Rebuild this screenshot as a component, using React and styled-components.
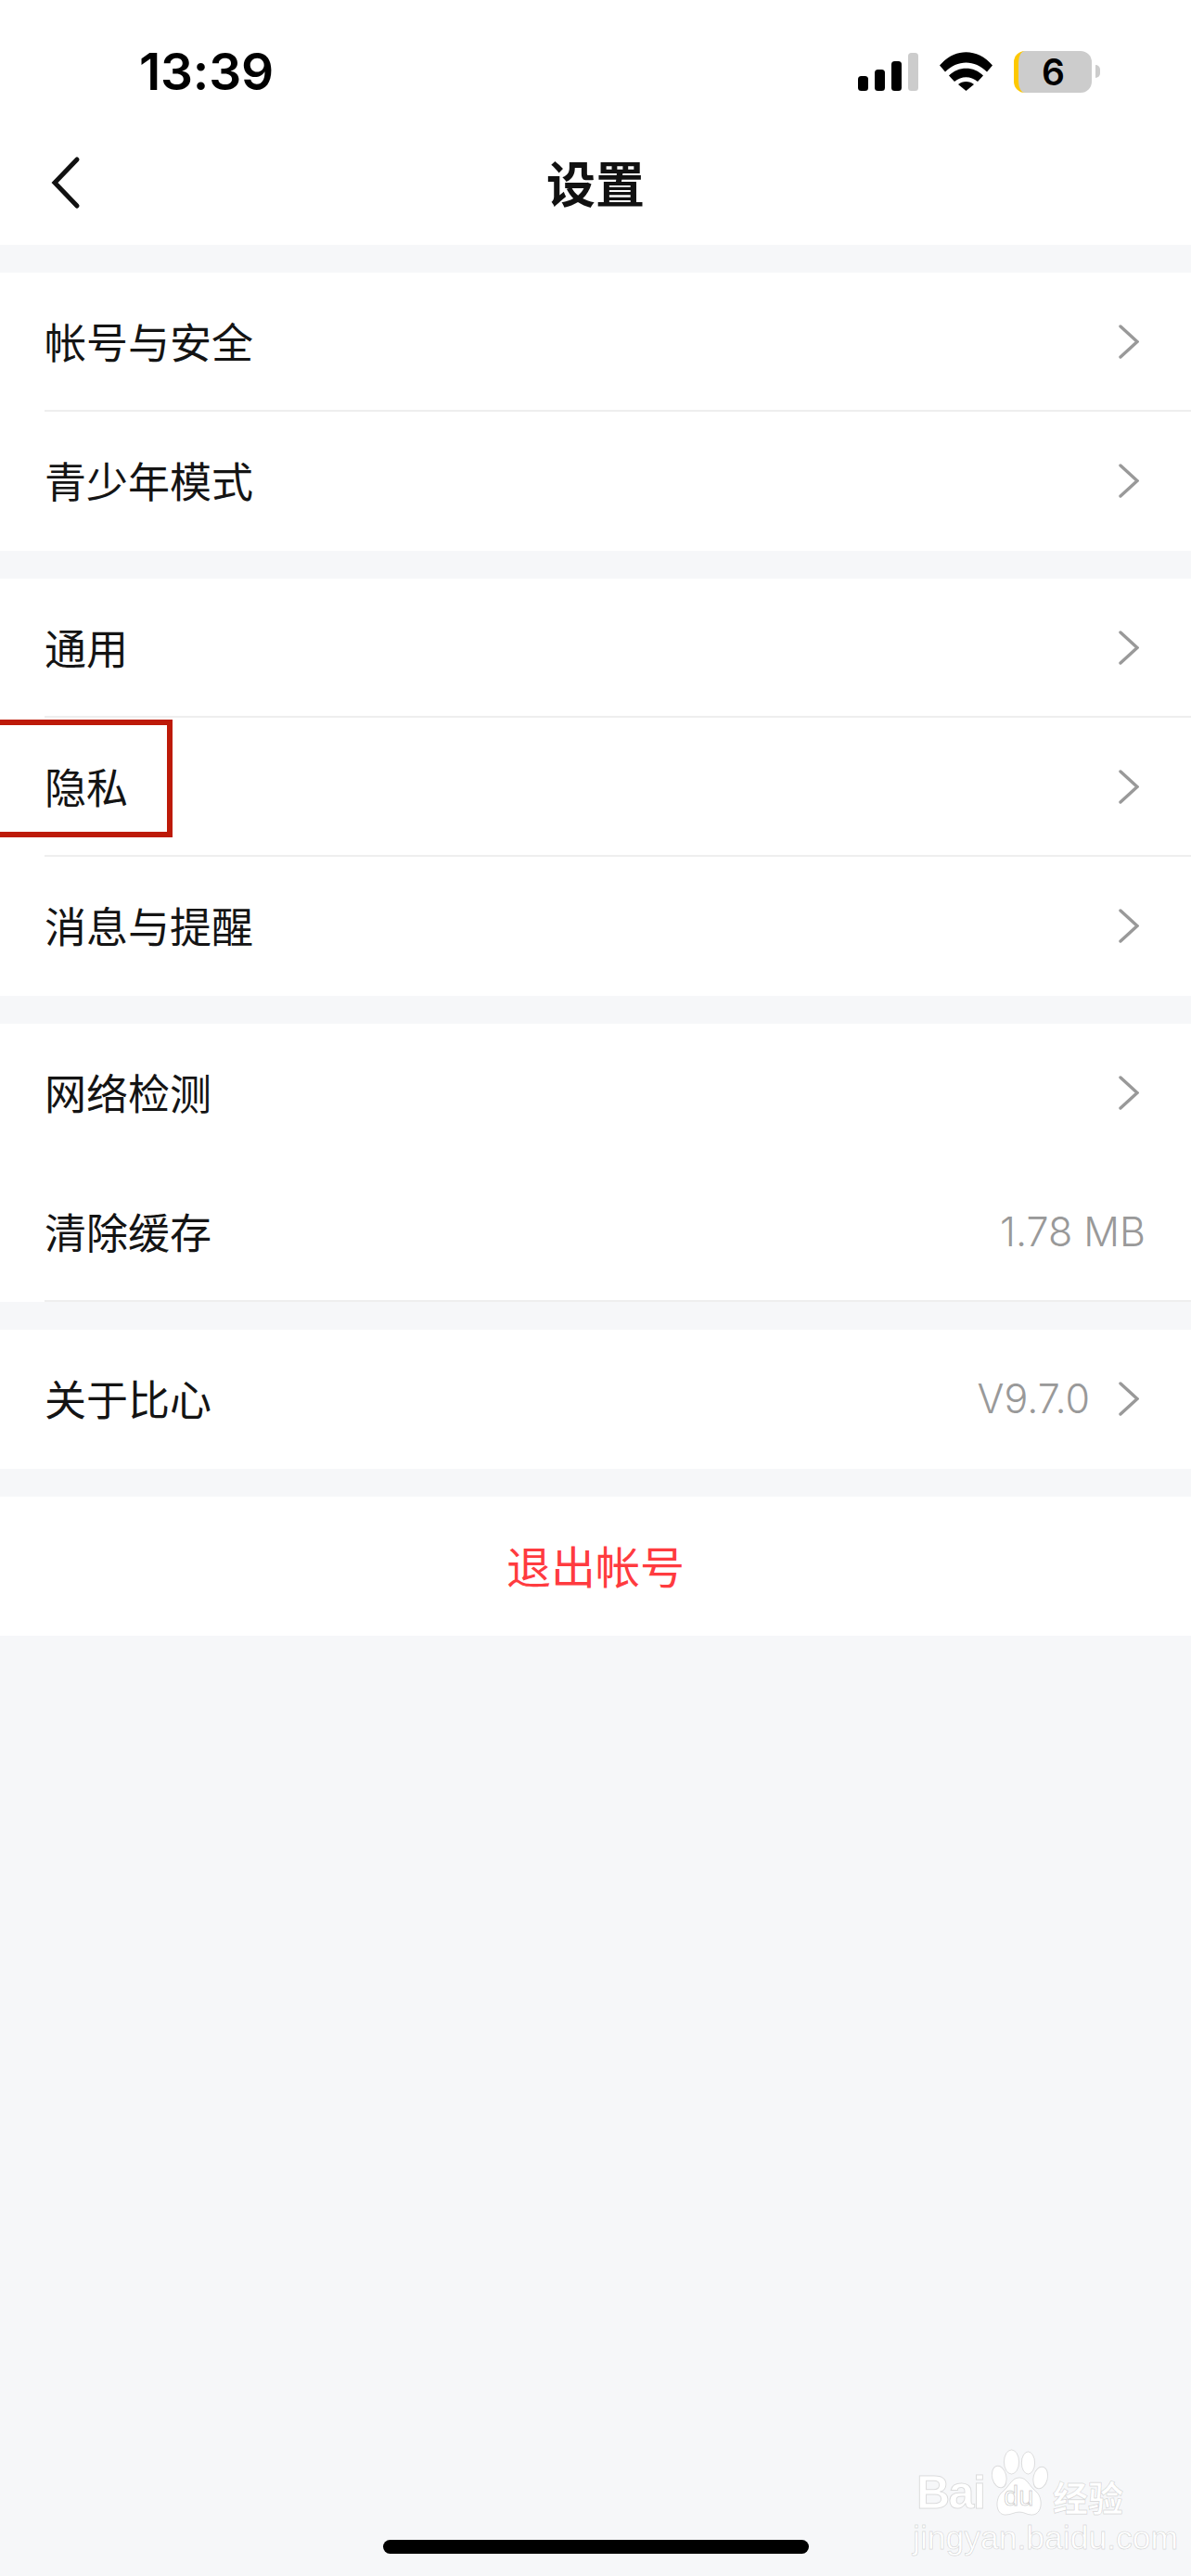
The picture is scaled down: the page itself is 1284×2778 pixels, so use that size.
import React from "react";
import styled, { createGlobalStyle } from "styled-components";

const CJK = `"Noto Sans CJK SC", "Noto Sans", sans-serif`;
const LATIN = `Inter, "Liberation Sans", sans-serif`;

const GlobalStyle = createGlobalStyle`
  html, body {
    margin: 0;
    padding: 0;
    background: #f6f7f9;
  }
`;

const Page = styled.div`
  position: relative;
  width: 1284px;
  height: 2778px;
  overflow: hidden;
  background: #f6f7f9;
  font-family: ${CJK};
`;

const Top = styled.header`
  background: #fff;
  margin-bottom: 30px;
`;

const StatusBar = styled.div`
  height: 132px;
  box-sizing: border-box;
  padding: 22px 98px 0 150px;
  display: flex;
  align-items: center;
  justify-content: space-between;
`;

const Time = styled.span`
  font-family: ${LATIN};
  font-size: 55px;
  font-weight: 600;
  color: #000;
  letter-spacing: -0.2px;
`;

const StatusIcons = styled.div`
  display: flex;
  align-items: center;
  gap: 23px;
`;

const Battery = styled.div`
  position: relative;
  width: 84px;
  height: 45px;
  border-radius: 12px;
  overflow: hidden;
  background: #cccccc;
  display: flex;
  align-items: center;
  justify-content: center;
  font-family: ${LATIN};
  font-size: 39px;
  font-weight: 600;
  color: #000;
  border-left: 5px solid #fdc800;
  box-sizing: border-box;
  padding-right: 4px;
`;

const BatteryWrap = styled.div`
  display: flex;
  align-items: center;
  gap: 4px;
`;

const BatteryTip = styled.div`
  width: 5px;
  height: 14px;
  background: #cccccc;
  border-radius: 0 7px 7px 0;
`;

const NavBar = styled.nav`
  position: relative;
  height: 132px;
  display: flex;
  align-items: center;
  justify-content: center;
`;

const BackIcon = styled.svg`
  position: absolute;
  left: 52px;
  top: 35px;
`;

const Title = styled.h1`
  margin: -5px 0 0;
  font-size: 53px;
  font-weight: 700;
  color: #111;
`;

const Group = styled.section`
  background: #fff;
  margin-bottom: 30px;
`;

const Row = styled.div`
  position: relative;
  height: 150px;
  padding-left: 48px;
`;

const RowInner = styled.div`
  height: 100%;
  box-sizing: border-box;
  display: flex;
  align-items: center;
  justify-content: space-between;
  padding-right: ${(p) => (p.$plain ? "49px" : "56px")};
  border-bottom: 2px solid ${(p) => (p.$line ? "#eeeeee" : "transparent")};
`;

const Label = styled.span`
  font-size: 45px;
  font-weight: 400;
  color: #141414;
  margin-top: -2px;
`;

const Right = styled.div`
  display: flex;
  align-items: center;
  gap: 31px;
`;

const Value = styled.span`
  font-family: ${LATIN};
  font-size: 43px;
  font-weight: 300;
  color: #999;
`;

const Logout = styled.button`
  display: block;
  width: 100%;
  height: 150px;
  border: 0;
  padding: 0 0 5px;
  background: #fff;
  font-family: ${CJK};
  font-size: 48px;
  font-weight: 400;
  color: #ff3b3f;
`;

const Highlight = styled.div`
  position: absolute;
  left: -6px;
  top: 2px;
  width: 192px;
  height: 127px;
  box-sizing: border-box;
  border: 6px solid #bd1a08;
`;

const HomeBar = styled.div`
  position: absolute;
  left: 413px;
  bottom: 24px;
  width: 459px;
  height: 15px;
  border-radius: 8px;
  background: #000;
`;

const Watermark = styled.div`
  position: absolute;
  left: 984px;
  top: 2641px;
  width: 240px;
  color: #fff;
  -webkit-text-stroke: 1px rgba(0, 0, 0, 0.13);
`;

const MarkTop = styled.div`
  display: flex;
  align-items: flex-end;
  height: 73px;
  white-space: nowrap;
`;

const MarkBai = styled.span`
  flex: none;
  width: 78px;
  font-family: "Liberation Sans", sans-serif;
  font-size: 50px;
  line-height: 54px;
  font-weight: 700;
  margin-left: 4px;
  margin-bottom: -1px;
  letter-spacing: -1.5px;
`;

const MarkPaw = styled.div`
  position: relative;
  width: 68px;
  height: 73px;
  flex: none;
  margin-left: -1px;
`;

const MarkDu = styled.span`
  position: absolute;
  left: 17px;
  top: 36px;
  font-family: "Liberation Sans", sans-serif;
  font-size: 29px;
  line-height: 30px;
  -webkit-text-stroke: 1px rgba(0, 0, 0, 0.2);
  color: transparent;
`;

const MarkCn = styled.span`
  flex: none;
  font-size: 38px;
  line-height: 44px;
  font-weight: 700;
  margin-left: 2px;
`;

const MarkUrl = styled.div`
  font-family: "Liberation Sans", sans-serif;
  font-size: 35.5px;
  line-height: 38px;
  margin-top: 4px;
  white-space: nowrap;
`;

const Chevron = () => (
  <svg width="22" height="37" viewBox="0 0 22 37" fill="none">
    <path d="M2 2 L20 18.5 L2 35" stroke="#999" strokeWidth="3.4" strokeLinecap="round" strokeLinejoin="miter" />
  </svg>
);

const SignalIcon = () => (
  <svg width="65" height="41" viewBox="0 0 65 41">
    <rect x="0" y="25" width="11" height="16" rx="3.5" fill="#000" />
    <rect x="18" y="18" width="11" height="23" rx="3.5" fill="#000" />
    <rect x="36" y="9" width="11" height="32" rx="3.5" fill="#000" />
    <rect x="54" y="0" width="11" height="41" rx="3.5" fill="#ccc" />
  </svg>
);

const WifiIcon = () => (
  <svg width="57" height="42" viewBox="0 0 57 42">
    <path d="M0 14.5 C16 -4.5 41 -4.5 57 14.5 L51 21.5 C38 8 19 8 6 21.5 Z" fill="#000" />
    <path d="M10 25.5 C20 15 37 15 47 25.5 L41 32 C33.5 25.5 23.5 25.5 16 32 Z" fill="#000" />
    <path d="M20 35 C24.5 31 32.5 31 37 35 L28.5 42 Z" fill="#000" />
  </svg>
);

const PawIcon = () => (
  <svg width="68" height="73" viewBox="0 0 72 73" preserveAspectRatio="none" fill="#fff" stroke="rgba(0,0,0,0.13)" strokeWidth="1">
    <ellipse cx="27" cy="14" rx="8.5" ry="13" />
    <ellipse cx="46" cy="15" rx="7.5" ry="12" />
    <ellipse cx="13" cy="30" rx="8" ry="12" transform="rotate(-15 13 30)" />
    <ellipse cx="60" cy="31" rx="8" ry="12" transform="rotate(15 60 31)" />
    <path d="M36 31 C45 31 47 40 55 46 C63 52 63 71 50 71 C44 71 42 68 36 68 C30 68 27 71 20 71 C8 71 8 52 17 46 C25 40 27 31 36 31 Z" />
  </svg>
);

const items = [
  [
    { label: "帐号与安全", line: true },
    { label: "青少年模式" },
  ],
  [
    { label: "通用", line: true },
    { label: "隐私", line: true, marked: true },
    { label: "消息与提醒" },
  ],
  [
    { label: "网络检测" },
    { label: "清除缓存", value: "1.78 MB", plain: true, line: true },
  ],
  [{ label: "关于比心", value: "V9.7.0" }],
];

export default function App() {
  return (
    <Page>
      <GlobalStyle />
      <Top>
        <StatusBar>
          <Time>13:39</Time>
          <StatusIcons>
            <SignalIcon />
            <WifiIcon />
            <BatteryWrap>
              <Battery>6</Battery>
              <BatteryTip />
            </BatteryWrap>
          </StatusIcons>
        </StatusBar>
        <NavBar>
          <BackIcon width="36" height="60" viewBox="0 0 36 60" fill="none">
            <path d="M31 5 L7 30 L31 55" stroke="#111" strokeWidth="5" strokeLinecap="round" />
          </BackIcon>
          <Title>设置</Title>
        </NavBar>
      </Top>

      {items.map((group, i) => (
        <Group key={i}>
          {group.map((item) => (
            <Row key={item.label}>
              <RowInner $line={item.line} $plain={item.plain}>
                <Label>{item.label}</Label>
                <Right>
                  {item.value && <Value>{item.value}</Value>}
                  {!item.plain && <Chevron />}
                </Right>
              </RowInner>
              {item.marked && <Highlight />}
            </Row>
          ))}
        </Group>
      ))}

      <Logout>退出帐号</Logout>

      <HomeBar />
      <Watermark>
        <MarkTop>
          <MarkBai>Bai</MarkBai>
          <MarkPaw>
            <PawIcon />
            <MarkDu>du</MarkDu>
          </MarkPaw>
          <MarkCn>经验</MarkCn>
        </MarkTop>
        <MarkUrl>jingyan.baidu.com</MarkUrl>
      </Watermark>
    </Page>
  );
}
